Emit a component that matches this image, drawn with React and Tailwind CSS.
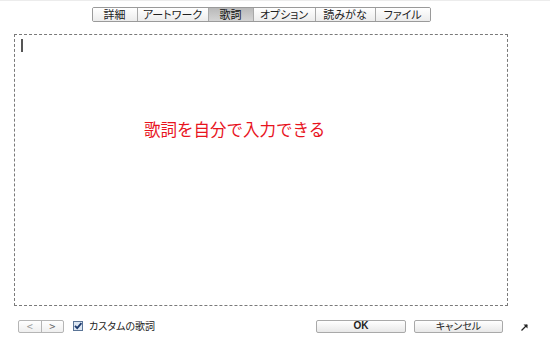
const tabs = [
  { label: "詳細", w: 44 },
  { label: "アートワーク", w: 71 },
  { label: "歌詞", w: 45, active: true },
  { label: "オプション", w: 62 },
  { label: "読みがな", w: 60 },
  { label: "ファイル", w: 55 },
];

const font = { fontFamily: '"Noto Sans CJK JP", "Liberation Sans", sans-serif' };

function Tabs() {
  return (
    <div className="flex h-[15px] rounded-[2px] border border-[#9a9a9a] overflow-hidden">
      {tabs.map((t, i) => (
        <div
          key={t.label}
          style={{ width: t.w }}
          className={
            "flex items-center justify-center text-[11px] leading-none [font-feature-settings:'palt'] " +
            (i > 0 ? "border-l border-[#a8a8a8] " : "") +
            (t.active
              ? "bg-gradient-to-b from-[#b9b9b9] to-[#d4d4d4] text-[#111]"
              : "bg-gradient-to-b from-[#ffffff] to-[#ececec] text-[#222]")
          }
        >
          {t.label}
        </div>
      ))}
    </div>
  );
}

function Checkbox() {
  return (
    <svg width="10" height="10" viewBox="0 0 10 10">
      <rect x="0.5" y="0.5" width="9" height="9" fill="#dce6f2" stroke="#5b7597" />
      <path d="M2 4.8 L4.2 7.2 L8.4 2.2" fill="none" stroke="#1d3b6e" strokeWidth="1.8" />
    </svg>
  );
}

export default function App() {
  return (
    <div
      style={font}
      className="w-[550px] h-[350px] bg-white border-t border-[#ececec] overflow-hidden"
    >
      <div className="w-[494px] ml-[14px] flex flex-col">
        <div className="flex justify-center pt-[6px]">
          <Tabs />
        </div>

        <div className="mt-[12px] h-[272px] border border-dashed border-[#7a7a7a] flex flex-col">
          <div className="ml-[6px] mt-[4px] w-[2px] h-[13px] bg-[#555]" />
          <div className="ml-[129px] mt-[68px] text-[16.5px] leading-[19px] text-[#e8141e] whitespace-nowrap">
            歌詞を自分で入力できる
          </div>
        </div>
      </div>

      <div className="ml-[14px] w-[515px] mt-[13px] flex items-center h-[14px] text-[#222]">
        <div className="ml-[4px] flex h-[13px] w-[46px] rounded-[2px] border border-[#b5b5b5] bg-gradient-to-b from-white to-[#efefef] text-[11px] leading-none text-[#9a9a9a]">
          <div className="flex-1 flex items-center justify-center">&lt;</div>
          <div className="flex-1 flex items-center justify-center border-l border-[#b5b5b5] text-[#666]">&gt;</div>
        </div>
        <div className="ml-[9px] flex items-center">
          <Checkbox />
        </div>
        <div className="ml-[6px] text-[10px] leading-none [font-feature-settings:'palt']">カスタムの歌詞</div>
        <div className="ml-auto flex items-center">
          <div
            className="w-[90px] h-[13px] rounded-[2px] border border-[#a9a9a9] bg-gradient-to-b from-white to-[#e8e8e8] flex items-center justify-center text-[10px] font-bold leading-none"
            style={{ fontFamily: '"Liberation Sans", sans-serif' }}
          >
            OK
          </div>
          <div className="ml-[8px] w-[89px] h-[13px] rounded-[2px] border border-[#a9a9a9] bg-gradient-to-b from-white to-[#e8e8e8] flex items-center justify-center text-[10px] leading-none [font-feature-settings:'palt']">
            キャンセル
          </div>
          <svg className="ml-[17px] mt-[3px]" width="9" height="9" viewBox="0 0 9 9">
            <path d="M1.5 7.5 L7 2" stroke="#222" strokeWidth="1.2" fill="none" />
            <path d="M3.5 1.5 L7.5 1.5 L7.5 5.5 Z" fill="#222" />
          </svg>
        </div>
      </div>
    </div>
  );
}
